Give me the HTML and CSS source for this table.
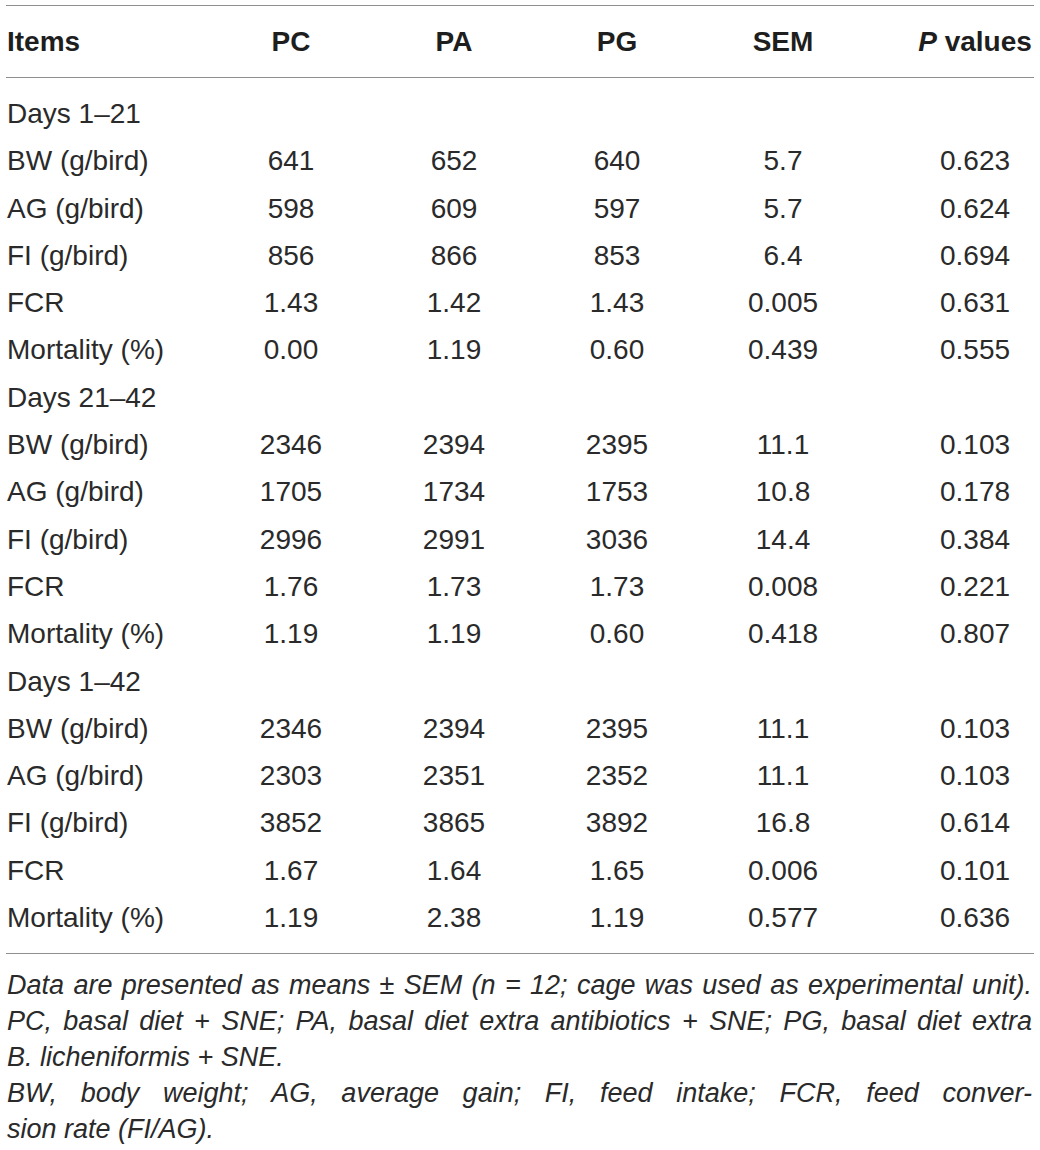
FILE: index.html
```html
<!DOCTYPE html>
<html lang="en">
<head>
    <meta charset="UTF-8">
    <meta name="viewport" content="width=device-width, initial-scale=1.0">
    <title>Growth performance</title>
    <link rel="stylesheet" href="styles.css">
</head>
<body>
    <div class="table-wrap">
        <table class="data-table">
            <colgroup>
                <col class="col-items">
                <col class="col-pc">
                <col class="col-pa">
                <col class="col-pg">
                <col class="col-sem">
                <col class="col-p">
            </colgroup>
            <thead>
                <tr>
                    <th class="label">Items</th>
                    <th>PC</th>
                    <th>PA</th>
                    <th>PG</th>
                    <th>SEM</th>
                    <th class="pval"><i>P</i> values</th>
                </tr>
            </thead>
            <tbody>
                <tr class="first"><td class="label">Days 1–21</td><td></td><td></td><td></td><td></td><td class="pval"></td></tr>
                <tr><td class="label">BW (g/bird)</td><td>641</td><td>652</td><td>640</td><td>5.7</td><td class="pval">0.623</td></tr>
                <tr><td class="label">AG (g/bird)</td><td>598</td><td>609</td><td>597</td><td>5.7</td><td class="pval">0.624</td></tr>
                <tr><td class="label">FI (g/bird)</td><td>856</td><td>866</td><td>853</td><td>6.4</td><td class="pval">0.694</td></tr>
                <tr><td class="label">FCR</td><td>1.43</td><td>1.42</td><td>1.43</td><td>0.005</td><td class="pval">0.631</td></tr>
                <tr><td class="label">Mortality (%)</td><td>0.00</td><td>1.19</td><td>0.60</td><td>0.439</td><td class="pval">0.555</td></tr>
                <tr><td class="label">Days 21–42</td><td></td><td></td><td></td><td></td><td class="pval"></td></tr>
                <tr><td class="label">BW (g/bird)</td><td>2346</td><td>2394</td><td>2395</td><td>11.1</td><td class="pval">0.103</td></tr>
                <tr><td class="label">AG (g/bird)</td><td>1705</td><td>1734</td><td>1753</td><td>10.8</td><td class="pval">0.178</td></tr>
                <tr><td class="label">FI (g/bird)</td><td>2996</td><td>2991</td><td>3036</td><td>14.4</td><td class="pval">0.384</td></tr>
                <tr><td class="label">FCR</td><td>1.76</td><td>1.73</td><td>1.73</td><td>0.008</td><td class="pval">0.221</td></tr>
                <tr><td class="label">Mortality (%)</td><td>1.19</td><td>1.19</td><td>0.60</td><td>0.418</td><td class="pval">0.807</td></tr>
                <tr><td class="label">Days 1–42</td><td></td><td></td><td></td><td></td><td class="pval"></td></tr>
                <tr><td class="label">BW (g/bird)</td><td>2346</td><td>2394</td><td>2395</td><td>11.1</td><td class="pval">0.103</td></tr>
                <tr><td class="label">AG (g/bird)</td><td>2303</td><td>2351</td><td>2352</td><td>11.1</td><td class="pval">0.103</td></tr>
                <tr><td class="label">FI (g/bird)</td><td>3852</td><td>3865</td><td>3892</td><td>16.8</td><td class="pval">0.614</td></tr>
                <tr><td class="label">FCR</td><td>1.67</td><td>1.64</td><td>1.65</td><td>0.006</td><td class="pval">0.101</td></tr>
                <tr class="last"><td class="label">Mortality (%)</td><td>1.19</td><td>2.38</td><td>1.19</td><td>0.577</td><td class="pval">0.636</td></tr>
            </tbody>
        </table>

        <div class="notes">
            <div class="line justify">Data are presented as means ± SEM (<i>n</i> = 12; cage was used as experimental unit).</div>
            <div class="line justify">PC, basal diet + SNE; PA, basal diet extra antibiotics + SNE; PG, basal diet extra</div>
            <div class="line">B. licheniformis + SNE.</div>
            <div class="line justify">BW, body weight; AG, average gain; FI, feed intake; FCR, feed conver-</div>
            <div class="line">sion rate (FI/AG).</div>
        </div>
    </div>
</body>
</html>
```

FILE: styles.css
```css
body {
    margin: 0;
    background-color: white;
    color: #2a2a2a;
    font-family: "Liberation Sans", Arial, sans-serif;
}
.table-wrap {
    width: 1028px;
    margin: 5px 0 0 6px;
}
.data-table {
    width: 100%;
    table-layout: fixed;
    border-collapse: collapse;
    font-size: 28px;
}
.col-items { width: 204px; }
.col-pc { width: 162px; }
.col-pa { width: 164px; }
.col-pg { width: 162px; }
.col-sem { width: 170px; }
.col-p { width: 166px; }
.data-table thead tr {
    border-top: 1px solid #8f8f8f;
    border-bottom: 1px solid #8f8f8f;
}
.data-table th {
    height: 71px;
    padding: 0;
    font-weight: bold;
    text-align: center;
    color: #1e1e1e;
}
.data-table td {
    padding: 0;
    height: 47.3px;
    line-height: 47.3px;
    text-align: center;
    white-space: nowrap;
}
.data-table .label {
    text-align: left;
    padding-left: 1px;
}
.data-table .pval {
    padding-left: 48px;
}
.data-table tr.first td {
    padding-top: 12px;
    line-height: 43px;
}
.data-table tr.last td {
    padding-bottom: 12px;
}
.data-table tbody {
    border-bottom: 1px solid #8f8f8f;
}
.notes {
    padding-top: 14px;
    font-size: 27px;
    font-style: italic;
    line-height: 35.8px;
}
.notes .line {
    padding-left: 1px;
    padding-right: 2px;
    white-space: nowrap;
}
.notes .justify {
    text-align: justify;
    text-align-last: justify;
}
```
